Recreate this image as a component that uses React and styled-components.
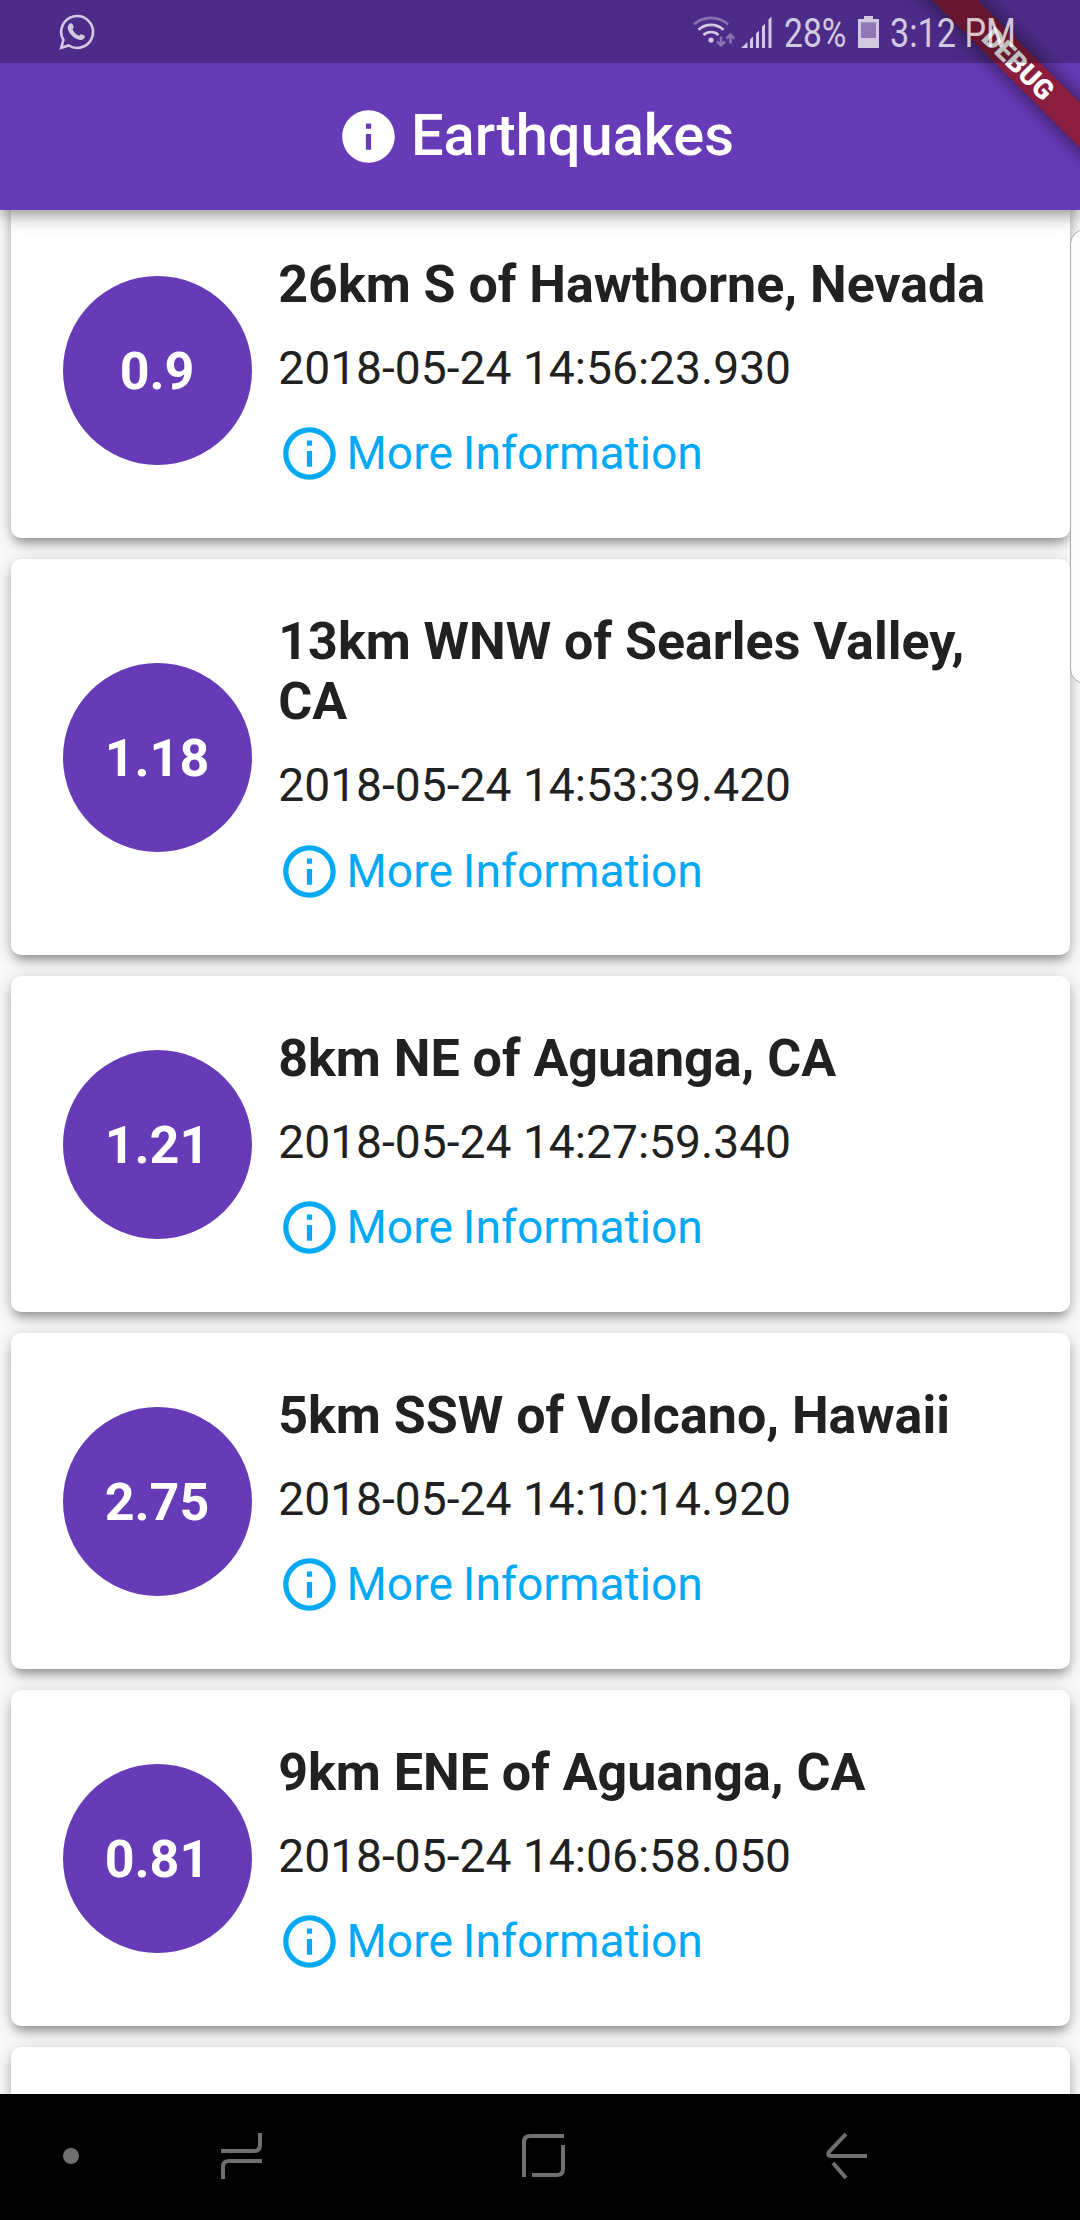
import React from "react";
import styled, { createGlobalStyle } from "styled-components";

const Global = createGlobalStyle`
  * { box-sizing: border-box; }
  html, body { margin: 0; padding: 0; }
  body { font-family: Roboto, "Liberation Sans", sans-serif; background: #fff; }
`;

const Screen = styled.div`
  position: relative;
  display: flex;
  flex-direction: column;
  width: 1080px;
  height: 2220px;
  overflow: hidden;
  background: #fafafa;
`;

const Header = styled.header`
  position: relative;
  z-index: 2;
  flex: none;
  height: 210px;
  display: flex;
  flex-direction: column;
  background: #673ab7;
  box-shadow: 0 5px 10px -2px rgba(0, 0, 0, 0.2), 0 10px 13px rgba(0, 0, 0, 0.14), 0 2px 26px rgba(0, 0, 0, 0.12);
`;

const StatusBar = styled.div`
  position: relative;
  z-index: 3;
  height: 63px;
  padding: 0 64px 0 58.5px;
  display: flex;
  align-items: center;
  justify-content: space-between;
  background: rgba(0, 0, 0, 0.25);
  color: rgba(255, 255, 255, 0.75);
  svg { display: block; flex: none; }
`;

const StatusGroup = styled.div`
  display: flex;
  align-items: center;
`;

const SignalSlot = styled.div`
  margin: 1px 0 0 5.5px;
`;

const BatterySlot = styled.div`
  margin: 1px 0 0 11.5px;
`;

const StatusText = styled.span`
  width: ${(p) => p.$w}px;
  padding-top: 4px;
  margin-left: ${(p) => p.$ml}px;
  font-size: 40px;
  line-height: 46px;
  white-space: nowrap;
  transform: scaleX(${(p) => p.$sx});
  transform-origin: 0 50%;
`;

const TitleBar = styled.div`
  flex: 1;
  display: flex;
  align-items: center;
  justify-content: center;
  gap: 10.5px;
  padding-right: 8.5px;
  color: #fff;
`;

const Title = styled.h1`
  margin: -3px 0 0;
  font-size: 57.75px;
  line-height: 68px;
  font-weight: 500;
`;

const BannerClip = styled.div`
  position: absolute;
  z-index: 2;
  top: 0;
  right: 0;
  width: 210px;
  height: 210px;
  overflow: hidden;
`;

const Banner = styled.div`
  position: absolute;
  left: -3px;
  top: 45.5px;
  width: 300px;
  height: 31.5px;
  padding-left: 5px;
  transform: rotate(45deg);
  background: #8b1e3f;
  box-shadow: 0 0 21px rgba(0, 0, 0, 0.6);
  color: #fff;
  font-size: 27.6px;
  line-height: 33px;
  font-weight: 900;
  text-align: center;
`;

const List = styled.main`
  flex: 1;
  min-height: 0;
  overflow: hidden;
  display: flex;
  flex-direction: column;
  gap: 21px;
  padding: 0 10.5px;
`;

const Card = styled.article`
  flex: none;
  margin-top: ${(p) => p.$pull || 0}px;
  min-height: 336px;
  display: flex;
  align-items: center;
  gap: 26.25px;
  padding: 52.5px;
  background: #fff;
  border-radius: 10px;
  box-shadow: 0 8px 10px -4px rgba(0, 0, 0, 0.26), 0 5px 13px rgba(0, 0, 0, 0.16), 0 3px 21px rgba(0, 0, 0, 0.12);
`;

const Magnitude = styled.div`
  flex: none;
  width: 189px;
  height: 189px;
  border-radius: 50%;
  display: flex;
  align-items: center;
  justify-content: center;
  padding: 2px 1px 0 0;
  background: #673ab7;
  color: #fff;
  font-size: 52px;
  line-height: 61px;
  font-weight: 700;
`;

const Details = styled.div`
  flex: 1;
  display: flex;
  flex-direction: column;
  gap: 26.25px;
`;

const Place = styled.h2`
  margin: 0;
  font-size: 51.975px;
  line-height: 60.75px;
  font-weight: 700;
  color: #212121;
`;

const Time = styled.div`
  margin: -1px 0 1px;
  font-size: 46.2px;
  line-height: 54px;
  color: #212121;
`;

const More = styled.a`
  display: flex;
  align-items: center;
  gap: 5.25px;
  height: 63px;
  font-size: 46.2px;
  line-height: 54px;
  color: #03a9f4;
`;

const MoreLabel = styled.span`
  margin-top: -1px;
  word-spacing: -1.5px;
`;

const EdgeHandle = styled.div`
  position: absolute;
  z-index: 3;
  left: 1069.5px;
  top: 229px;
  width: 30px;
  height: 455px;
  border: 1.5px solid #a9a9a9;
  border-radius: 16px;
  background: #fcfcfc;
`;

const NavBar = styled.nav`
  position: relative;
  z-index: 2;
  flex: none;
  height: 126px;
  display: flex;
  align-items: center;
  padding: 0 212px 2px 63px;
  background: #000;
  svg { display: block; flex: none; }
`;

const NavItem = styled.div`
  margin-left: ${(p) => p.$ml || 0}px;
`;

const InfoFilled = () => (
  <svg width="63" height="63" viewBox="0 0 24 24" fill="currentColor">
    <path d="M12 2C6.48 2 2 6.48 2 12s4.48 10 10 10 10-4.48 10-10S17.52 2 12 2zm1 15h-2v-6h2v6zm0-8h-2V7h2v2z" />
  </svg>
);

const InfoOutline = () => (
  <svg width="63" height="63" viewBox="0 0 24 24" fill="currentColor">
    <path d="M11 17h2v-6h-2v6zm1-15C6.48 2 2 6.48 2 12s4.48 10 10 10 10-4.48 10-10S17.52 2 12 2zm0 18c-4.41 0-8-3.59-8-8s3.59-8 8-8 8 3.59 8 8-3.59 8-8 8zM11 9h2V7h-2v2z" />
  </svg>
);

const WhatsApp = () => (
  <svg width="36" height="36" viewBox="0 0 36 36" fill="none">
    <path d="M2.2 33.8 4.4 26A15.9 15.9 0 1 1 9.800 31.500Z" stroke="currentColor" strokeWidth="2.6" />
    <path d="M10 10.200c1-1.300 3-1.300 3.600 0l1 2.500c.4 1-1.200 2.200-1 2.900 1.200 2.600 3.200 4.700 5.900 6 .9.3 2-1.700 2.900-1.400l3 1.400c.8.5.4 2-.3 2.800-1.500 1.500-3.800 1.900-6 1.100-4.700-1.700-8.400-5.400-10-9.800-.7-2-.4-4 .9-5.500z" fill="currentColor" />
  </svg>
);

const Wifi = () => (
  <svg width="42" height="34" viewBox="0 0 42 34" fill="none" stroke="currentColor">
    <g strokeWidth="2.6">
      <path d="M1 9.200A26 26 0 0 1 35 9.200" opacity="0.45" />
      <path d="M5.500 14.700A18.500 18.500 0 0 1 30.500 14.700" />
      <path d="M10.500 20A11 11 0 0 1 25.500 20" />
    </g>
    <circle cx="18" cy="25" r="2.600" fill="currentColor" stroke="none" />
    <g opacity="0.45" strokeWidth="2.600">
      <path d="M28 21.500v9M24 26.500l4 4 4-4" />
      <path d="M37.500 28.500v-9M33.500 23.500l4-4 4 4" />
    </g>
  </svg>
);

const Signal = () => (
  <svg width="31" height="32" viewBox="0 0 31 32" fill="currentColor">
    <path d="M0 32 6.500 26V32zM9 23.500l3-3V32H9zM15 17.500l3-3V32h-3zM21 10.500l3-3V32h-3zM27.500 3.500l3-3V32h-3z" />
  </svg>
);

const Battery = () => (
  <svg width="21" height="32" viewBox="0 0 21 32" fill="currentColor">
    <path d="M3 6.500H18V22H3z" opacity="0.5" />
    <path fillRule="evenodd" d="M6 0h9v3h6v29H0V3h6zM3 6.500V22h15V6.500z" />
  </svg>
);

const quakes = [
  { mag: "0.9", place: "26km S of Hawthorne, Nevada", time: "2018-05-24 14:56:23.930" },
  { mag: "1.18", place: "13km WNW of Searles Valley, CA", time: "2018-05-24 14:53:39.420" },
  { mag: "1.21", place: "8km NE of Aguanga, CA", time: "2018-05-24 14:27:59.340" },
  { mag: "2.75", place: "5km SSW of Volcano, Hawaii", time: "2018-05-24 14:10:14.920" },
  { mag: "0.81", place: "9km ENE of Aguanga, CA", time: "2018-05-24 14:06:58.050" },
];

export default function App() {
  return (
    <Screen>
      <Global />
      <Header>
        <StatusBar>
          <WhatsApp />
          <StatusGroup>
            <Wifi />
            <SignalSlot><Signal /></SignalSlot>
            <StatusText $w={63} $ml={12} $sx={0.84}>28%</StatusText>
            <BatterySlot><Battery /></BatterySlot>
            <StatusText $w={126} $ml={11} $sx={0.855}>3:12 PM</StatusText>
          </StatusGroup>
        </StatusBar>
        <TitleBar>
          <InfoFilled />
          <Title>Earthquakes</Title>
        </TitleBar>
        <BannerClip>
          <Banner>DEBUG</Banner>
        </BannerClip>
      </Header>
      <List>
        {quakes.map((q, i) => (
          <Card key={q.time} $pull={i === 0 ? -7.9 : 0}>
            <Magnitude>{q.mag}</Magnitude>
            <Details>
              <Place>{q.place}</Place>
              <Time>{q.time}</Time>
              <More>
                <InfoOutline />
                <MoreLabel>More Information</MoreLabel>
              </More>
            </Details>
          </Card>
        ))}
        <Card />
      </List>
      <EdgeHandle />
      <NavBar>
        <NavItem>
          <svg width="16" height="16" viewBox="0 0 16 16"><circle cx="8" cy="8" r="8" fill="#6f6f6f" /></svg>
        </NavItem>
        <NavItem $ml={142}>
          <svg width="41" height="48" viewBox="0 0 41 48" fill="none" stroke="#6f6f6f" strokeWidth="4">
            <path d="M0 19H33Q39 19 39 13V1M41 29H8Q2 29 2 35V47" />
          </svg>
        </NavItem>
        <NavItem $ml={260}>
          <svg width="43" height="44" viewBox="0 0 43 44" fill="none" stroke="#6f6f6f" strokeWidth="4">
            <path d="M2 43V8Q2 2 8 2H42M41 11V35Q41 41 35 41H10" />
          </svg>
        </NavItem>
        <NavItem $ml={261}>
          <svg width="42" height="48" viewBox="0 0 42 48" fill="none" stroke="#6f6f6f" strokeWidth="4">
            <path d="M20 2 3 20Q1 24 5 24H41M7 31 20 46" />
          </svg>
        </NavItem>
      </NavBar>
    </Screen>
  );
}
